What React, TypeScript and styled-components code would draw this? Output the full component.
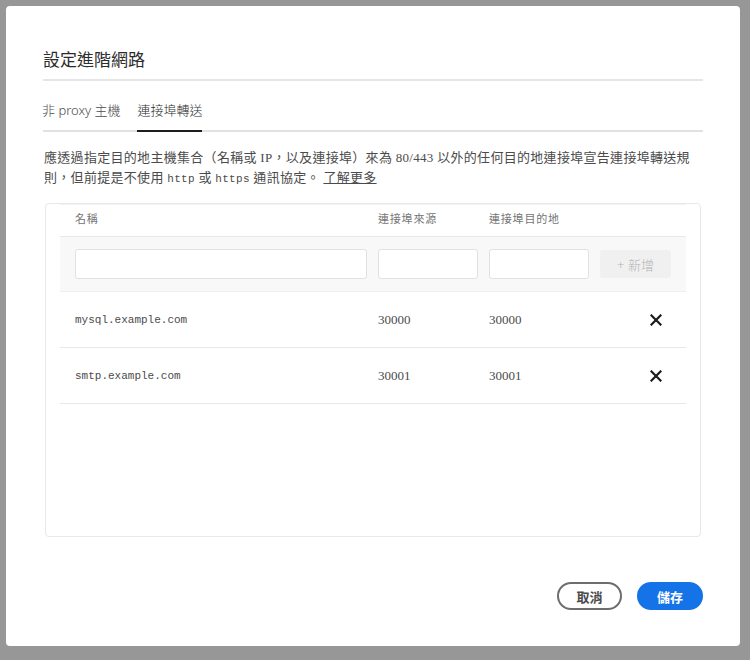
import React from "react";
import styled, { createGlobalStyle } from "styled-components";

const GlobalStyle = createGlobalStyle`
  html, body {
    margin: 0;
    padding: 0;
    background: #979797;
  }
  body {
    padding: 6px;
    font-family: "Noto Sans", "Noto Sans CJK TC", sans-serif;
  }
  * { box-sizing: border-box; }
`;

const Dialog = styled.div`
  width: 734px;
  height: 640px;
  background: #fff;
  border-radius: 4px;
  padding: 42px 37px 36px;
  display: flex;
  flex-direction: column;
`;

const Title = styled.h2`
  margin: 0;
  font-size: 17px;
  font-weight: 400;
  line-height: 24px;
  color: #2c2c2c;
  padding-bottom: 7px;
  border-bottom: 2px solid #e6e6e6;
`;

const TabList = styled.div`
  display: flex;
  gap: 17px;
  margin-top: 15px;
  border-bottom: 2px solid #e1e1e1;
`;

const Tab = styled.div<{ active?: boolean }>`
  font-size: 13px;
  line-height: 28px;
  padding-bottom: 6px;
  margin-bottom: -2px;
  margin-left: ${(p) => (p.active ? 0 : -1)}px;
  color: ${(p) => (p.active ? "#2c2c2c" : "#4b4b4b")};
  border-bottom: 2px solid ${(p) => (p.active ? "#1d1d1d" : "transparent")};
  font-weight: 300;
  white-space: nowrap;
`;

const Description = styled.p`
  margin: 16px 0 0 1px;
  font-family: "Liberation Serif", "Noto Sans CJK TC", serif;
  font-size: 13px;
  line-height: 20px;
  letter-spacing: 0.3px;
  color: #4b4b4b;
  white-space: nowrap;
`;

const Code = styled.span`
  font-family: "Liberation Mono", monospace;
  font-size: 11px;
`;

const Link = styled.a`
  color: #4b4b4b;
  text-decoration: underline;
  cursor: pointer;
`;

const TableBox = styled.div`
  margin: 14px 2px 0;
  flex: 1;
  border: 1px solid #e8e8e8;
  border-radius: 4px;
  padding: 0 14px;
`;

const Row = styled.div<{ shaded?: boolean; height: number }>`
  display: grid;
  grid-template-columns: 292px 100px 100px 71px;
  column-gap: 11px;
  align-items: center;
  padding: 0 15px;
  height: ${(p) => p.height}px;
  background: ${(p) => (p.shaded ? "#f8f8f8" : "transparent")};
  border-bottom: 1px solid ${(p) => (p.shaded ? "#efefef" : "#e8e8e8")};
`;

const HeaderRow = styled(Row)`
  align-items: start;
  padding-top: 6px;
  border-top: 1px solid #f2f2f2;
`;

const HeadCell = styled.div`
  font-family: "Liberation Serif", "Noto Sans CJK TC", serif;
  font-size: 11px;
  line-height: 16px;
  letter-spacing: 0.8px;
  color: #747474;
`;

const Input = styled.input`
  width: 100%;
  height: 30px;
  border: 1px solid #e1e1e1;
  border-radius: 3px;
  background: #fff;
  outline: none;
`;

const AddButton = styled.button`
  height: 28px;
  border: none;
  border-radius: 3px;
  background: #f0f0f0;
  color: #b3b3b3;
  font-family: "Noto Sans", "Noto Sans CJK TC", sans-serif;
  font-size: 13px;
  font-weight: 300;
  padding: 0;
`;

const HostCell = styled.div`
  font-family: "Liberation Mono", monospace;
  font-size: 11px;
  color: #4b4b4b;
`;

const PortCell = styled.div`
  font-family: "Liberation Serif", serif;
  font-size: 13px;
  color: #4b4b4b;
`;

const RemoveCell = styled.div`
  display: flex;
  justify-content: flex-end;
  padding-right: 9px;
  cursor: pointer;
`;

const Footer = styled.div`
  margin-top: 45px;
  display: flex;
  justify-content: flex-end;
  gap: 15px;
`;

const PillButton = styled.button<{ primary?: boolean }>`
  height: 28px;
  border-radius: 14px;
  font-family: "Noto Sans", "Noto Sans CJK TC", sans-serif;
  font-size: 13px;
  font-weight: 700;
  padding: 0;
  width: ${(p) => (p.primary ? 66 : 65)}px;
  border: 2px solid ${(p) => (p.primary ? "#1473e6" : "#6e6e6e")};
  background: ${(p) => (p.primary ? "#1473e6" : "#fff")};
  color: ${(p) => (p.primary ? "#fff" : "#4b4b4b")};
`;

const CloseIcon = () => (
  <svg width="12" height="12" viewBox="0 0 12 12" fill="none">
    <path d="M1.5 1.5L10.5 10.5M10.5 1.5L1.5 10.5" stroke="#1b1b1b" strokeWidth="2.2" strokeLinecap="square" />
  </svg>
);

const rules = [
  { host: "mysql.example.com", src: "30000", dst: "30000" },
  { host: "smtp.example.com", src: "30001", dst: "30001" },
];

export default function App() {
  return (
    <>
      <GlobalStyle />
      <Dialog>
        <Title>設定進階網路</Title>
        <TabList>
          <Tab>非 proxy 主機</Tab>
          <Tab active>連接埠轉送</Tab>
        </TabList>
        <Description>
          應透過指定目的地主機集合（名稱或 IP，以及連接埠）來為 80/443 以外的任何目的地連接埠宣告連接埠轉送規
          <br />
          則，但前提是不使用 <Code>http</Code> 或 <Code>https</Code> 通訊協定。 <Link>了解更多</Link>
        </Description>
        <TableBox>
          <HeaderRow height={33}>
            <HeadCell>名稱</HeadCell>
            <HeadCell>連接埠來源</HeadCell>
            <HeadCell>連接埠目的地</HeadCell>
            <div />
          </HeaderRow>
          <Row shaded height={55}>
            <Input />
            <Input />
            <Input />
            <AddButton>+ 新增</AddButton>
          </Row>
          {rules.map((r) => (
            <Row key={r.host} height={56}>
              <HostCell>{r.host}</HostCell>
              <PortCell>{r.src}</PortCell>
              <PortCell>{r.dst}</PortCell>
              <RemoveCell>
                <CloseIcon />
              </RemoveCell>
            </Row>
          ))}
        </TableBox>
        <Footer>
          <PillButton>取消</PillButton>
          <PillButton primary>儲存</PillButton>
        </Footer>
      </Dialog>
    </>
  );
}
